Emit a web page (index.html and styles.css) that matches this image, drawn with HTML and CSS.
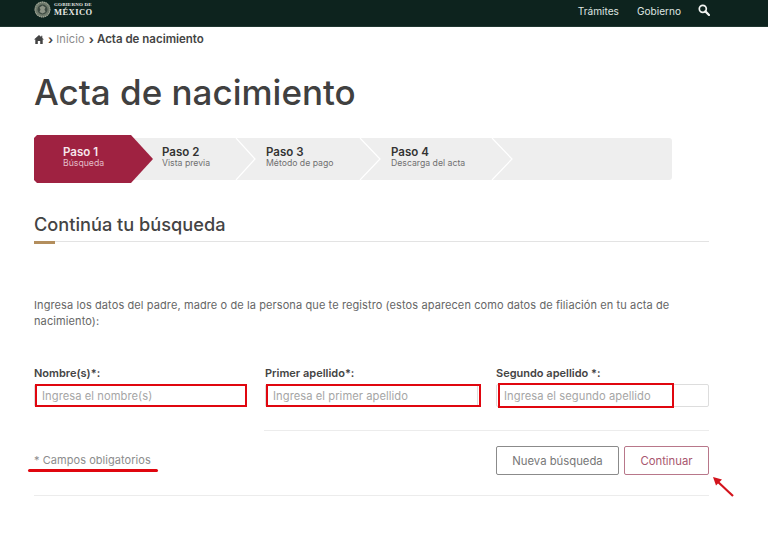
FILE: index.html
```html
<!DOCTYPE html>
<html lang="es">
<head>
<meta charset="utf-8">
<title>Acta de nacimiento</title>
<link rel="stylesheet" href="styles.css">
</head>
<body>
<header class="topbar">
  <div class="brand">
    <svg class="emblem" width="17" height="17" viewBox="0 0 17 17" aria-hidden="true">
      <circle cx="8.500" cy="8.500" r="8" fill="#6f7a6c"/>
      <circle cx="8.500" cy="8.500" r="7.400" fill="none" stroke="#a9ae9f" stroke-width="1.100" stroke-dasharray="1 1"/>
      <circle cx="8.500" cy="8.500" r="5" fill="#3d4a42"/>
      <path d="M5.500 6.500l3-2 3 2-1 2 1 2.500-3 1.500-3-1.500 1-2.500z" fill="#8d9486"/>
    </svg>
    <div class="brand-text">
      <span class="brand-small">GOBIERNO DE</span>
      <span class="brand-big">MÉXICO</span>
    </div>
  </div>
  <nav class="topnav">
    <a>Trámites</a>
    <a>Gobierno</a>
    <svg class="search" width="12" height="12" viewBox="0 0 12 12" aria-hidden="true">
      <circle cx="4.800" cy="4.800" r="3.500" fill="none" stroke="#f2f4f2" stroke-width="1.700"/>
      <path d="M7.400 7.400L11 11" stroke="#f2f4f2" stroke-width="2.200" stroke-linecap="round"/>
    </svg>
  </nav>
</header>

<main class="page">
  <div class="crumbs">
    <svg width="10" height="9" viewBox="0 0 10 9" aria-hidden="true"><path d="M5 0L0 4.500h1.300V9h2.500V6h2.400v3h2.500V4.500H10L8.300 3V.7H7.200V2z" fill="#444"/></svg>
    <span class="sep">›</span><span class="crumb-link">Inicio</span>
    <span class="sep sep-last">›</span><strong>Acta de nacimiento</strong>
  </div>

  <h1>Acta de nacimiento</h1>

  <div class="stepper">
    <div class="track">
      <div class="step step-1"><b>Paso 2</b><span>Vista previa</span></div>
      <div class="step step-2"><b>Paso 3</b><span>Método de pago</span></div>
      <div class="step step-3"><b>Paso 4</b><span>Descarga del acta</span></div>
    </div>
    <svg class="chevrons" width="638" height="42" viewBox="0 0 638 42" aria-hidden="true">
      <path d="M202 0l19 21-19 21M326 0l20 21-20 21M458 0l20 21-20 21" fill="none" stroke="#fff" stroke-width="1.200"/>
    </svg>
    <div class="active-step"><b>Paso 1</b><span>Búsqueda</span></div>
  </div>

  <div class="section-title">
    <h2>Continúa tu búsqueda</h2>
  </div>

  <p class="intro">Ingresa los datos del padre, madre o de la persona que te registro (estos aparecen como datos de filiación en tu acta de nacimiento):</p>

  <div class="fields">
    <div class="field">
      <label for="n">Nombre(s)*:</label>
      <div class="input-wrap">
        <input id="n" placeholder="Ingresa el nombre(s)">
        <i class="mark mark-1"></i>
      </div>
    </div>
    <div class="field">
      <label for="p">Primer apellido*:</label>
      <div class="input-wrap">
        <input id="p" placeholder="Ingresa el primer apellido">
        <i class="mark mark-2"></i>
      </div>
    </div>
    <div class="field">
      <label for="s">Segundo apellido *:</label>
      <div class="input-wrap">
        <input id="s" placeholder="Ingresa el segundo apellido">
        <i class="mark mark-3"></i>
      </div>
    </div>
  </div>

  <div class="divider-short"></div>

  <div class="actions">
    <div class="required">* Campos obligatorios<i class="underline"></i></div>
    <div class="buttons">
      <button class="btn btn-grey">Nueva búsqueda</button>
      <button class="btn btn-red">Continuar</button>
      <svg class="arrow" width="24" height="22" viewBox="0 0 24 22" aria-hidden="true">
        <path d="M21 20L5 5" stroke="#d3131c" stroke-width="2.200"/>
        <path d="M1 1l9 2.500-6 6z" fill="#d3131c"/>
      </svg>
    </div>
  </div>
  <div class="divider-full"></div>
</main>
</body>
</html>
```
FILE: styles.css
```css
* { box-sizing: border-box; }
html, body { margin: 0; padding: 0; }
body {
  background: #fff;
  color: #444;
  font-family: Inter, "Open Sans", "Liberation Sans", sans-serif;
  width: 768px;
  height: 548px;
  overflow: hidden;
}
.topbar {
  height: 27px;
  background: #0d231e;
  display: flex;
  justify-content: space-between;
  padding: 1px 58px 0 34px;
  border-bottom: 1px solid #1f3630;
}
.brand { display: flex; gap: 3px; height: 17px; }
.emblem { display: block; }
.brand-text {
  display: flex;
  flex-direction: column;
  font-family: "Liberation Serif", serif;
  color: #e6e8e4;
  font-weight: 700;
  line-height: 1;
  padding-top: 1px;
}
.brand-small { font-size: 5px; letter-spacing: .2px; height: 6px; }
.brand-big { font-size: 8.500px; letter-spacing: .45px; }
.topnav {
  display: flex;
  align-items: center;
  gap: 18px;
  height: 20px;
  font-size: 10.100px;
  color: #dfe5e1;
}
.search { margin-left: -1px; margin-top: -3px; }
.page { padding: 0 59px 0 34px; }
.crumbs {
  display: flex;
  align-items: center;
  height: 14px;
  margin-top: 5px;
  font-size: 11px;
  color: #444;
}
.crumbs .sep { margin: 0 3px 0 4px; font-weight: 700; font-size: 12px; }
.crumbs .sep-last { margin: 0 3px 0 2px; }
.crumb-link { color: #8a8a8a; margin-right: 2px; letter-spacing: .15px; }
.crumbs strong { font-size: 11.500px; font-weight: 600; }
h1 {
  margin: 24px 0 0;
  font-size: 35px;
  line-height: 44px;
  font-weight: 500;
  color: #404040;
}
.stepper {
  position: relative;
  height: 48px;
  margin-top: 21px;
  width: 638px;
  padding-top: 3px;
}
.track {
  height: 42px;
  background: #eeeeee;
  border-radius: 3px;
  display: flex;
}
.step {
  display: flex;
  flex-direction: column;
  justify-content: center;
  padding-bottom: 3px;
}
.step b, .active-step b {
  font-size: 11.500px;
  line-height: 13px;
  font-weight: 600;
  color: #333;
}
.step span, .active-step span {
  font-size: 8.700px;
  line-height: 11px;
  margin-top: -1px;
  color: #707070;
  white-space: nowrap;
}
.step-1 { margin-left: 128px; width: 104px; }
.step-2 { width: 125px; }
.step-3 { width: 150px; }
.chevrons { position: absolute; left: 0; top: 3px; }
.active-step {
  position: absolute;
  left: 0;
  top: 0;
  width: 119px;
  height: 48px;
  background: #9f2241;
  clip-path: polygon(3px 0, 97px 0, 119px 24px, 97px 48px, 3px 48px, 0 45px, 0 3px);
  padding: 11px 0 0 29px;
  display: flex;
  flex-direction: column;
}
.active-step b { color: #f6e8ec; }
.active-step span { color: #e3bcc7; }
.section-title {
  position: relative;
  margin-top: 29px;
  height: 30px;
  border-bottom: 1px solid #e3e3e3;
}
.section-title::after {
  content: "";
  position: absolute;
  left: 0;
  bottom: -3px;
  width: 21px;
  height: 3px;
  background: #b38e5d;
}
h2 {
  margin: 0;
  font-size: 18.200px;
  line-height: 24px;
  font-weight: 500;
  color: #444;
}
.intro {
  margin: 55px 0 0;
  font-size: 11px;
  line-height: 16px;
  color: #666;
  width: 650px;
  letter-spacing: .1px;
}
.fields {
  display: grid;
  grid-template-columns: repeat(3, 213px);
  gap: 18px;
  margin-top: 37px;
}
.field label {
  display: block;
  font-size: 11px;
  line-height: 14px;
  font-weight: 600;
  color: #444;
  margin-bottom: 4px;
}
.input-wrap { position: relative; }
input {
  display: block;
  width: 100%;
  height: 23px;
  border: 1px solid #dddddd;
  border-radius: 2px;
  padding: 0 7px;
  font: 11.200px Inter, "Open Sans", sans-serif;
  letter-spacing: .05px;
  color: #555;
  background: #fff;
}
input::placeholder { color: #a6a6a6; opacity: 1; }
.mark {
  position: absolute;
  border: 2.500px solid #e0060f;
  pointer-events: none;
}
.mark-1 { left: 1px; right: 0; top: 0; bottom: 0; }
.mark-2 { left: 1px; right: -3px; top: 0; bottom: 0; }
.mark-3 { left: 2px; right: 35px; top: -1px; bottom: -1px; }
.divider-short {
  height: 1px;
  background: #ececec;
  margin: 23px 0 0 230px;
}
.actions {
  display: flex;
  justify-content: space-between;
  align-items: center;
  margin-top: 15px;
  height: 29px;
}
.required {
  position: relative;
  font-size: 11px;
  color: #8c8c8c;
  margin-top: -1px;
  letter-spacing: .05px;
}
.underline {
  position: absolute;
  left: -6px;
  right: -7px;
  bottom: -5px;
  height: 3px;
  border-radius: 2px;
  background: #e0060f;
}
.buttons { position: relative; display: flex; gap: 5px; }
.btn {
  height: 29px;
  background: #fff;
  border-radius: 2px;
  font: 11.300px Inter, "Open Sans", sans-serif;
  padding: 0;
}
.btn-grey { width: 123px; border: 1px solid #8b8b8b; color: #777; }
.btn-red { width: 85px; border: 1px solid #b8778a; color: #a8566e; }
.arrow { position: absolute; left: 216px; top: 30px; }
.divider-full { height: 1px; background: #ececec; margin-top: 20px; }
```
